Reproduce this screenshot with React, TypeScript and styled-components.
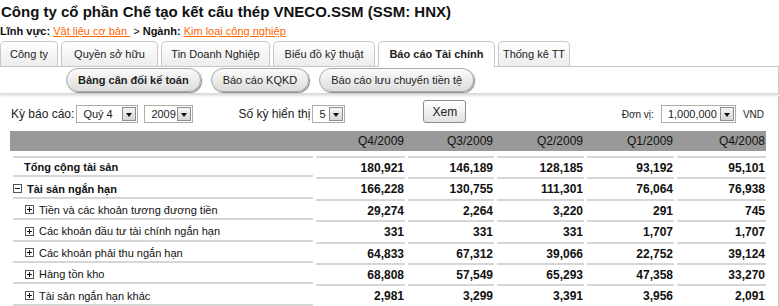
import React from 'react';
import styled, { createGlobalStyle } from 'styled-components';

const GlobalStyle = createGlobalStyle`
  body {
    margin: 0;
    background: #fff;
    color: #1a1a1a;
    font-family: "Liberation Sans", Arial, sans-serif;
  }
`;

type Row = {
  label: string;
  level: 0 | 1 | 2;
  open?: boolean;
  values: string[];
};

const periods = ['Q4/2009', 'Q3/2009', 'Q2/2009', 'Q1/2009', 'Q4/2008'];

const rows: Row[] = [
  { label: 'Tổng cộng tài sản', level: 0, values: ['180,921', '146,189', '128,185', '93,192', '95,101'] },
  { label: 'Tài sản ngắn hạn', level: 1, open: true, values: ['166,228', '130,755', '111,301', '76,064', '76,938'] },
  { label: 'Tiền và các khoản tương đương tiền', level: 2, values: ['29,274', '2,264', '3,220', '291', '745'] },
  { label: 'Các khoản đầu tư tài chính ngắn hạn', level: 2, values: ['331', '331', '331', '1,707', '1,707'] },
  { label: 'Các khoản phải thu ngắn hạn', level: 2, values: ['64,833', '67,312', '39,066', '22,752', '39,124'] },
  { label: 'Hàng tồn kho', level: 2, values: ['68,808', '57,549', '65,293', '47,358', '33,270'] },
  { label: 'Tài sản ngắn hạn khác', level: 2, values: ['2,981', '3,299', '3,391', '3,956', '2,091'] },
];

const tabs = [
  { name: 'Công ty', width: 58 },
  { name: 'Quyền sở hữu', width: 97 },
  { name: 'Tin Doanh Nghiệp', width: 109 },
  { name: 'Biểu đồ kỹ thuật', width: 102 },
  { name: 'Báo cáo Tài chính', width: 117, active: true },
  { name: 'Thống kê TT', width: 72 },
];

const reports = ['Bảng cân đối kế toán', 'Báo cáo KQKD', 'Báo cáo lưu chuyển tiền tệ'];

const ExpandIcon: React.FC<{ open?: boolean }> = ({ open }) => (
  <svg width="9" height="9" viewBox="0 0 9 9">
    <rect x="0.5" y="0.5" width="8" height="8" fill="#fff" stroke="#555" />
    <line x1="2" y1="4.5" x2="7" y2="4.5" stroke="#111" />
    {open ? null : <line x1="4.5" y1="2" x2="4.5" y2="7" stroke="#111" />}
  </svg>
);

const Select: React.FC<{ value: string; width: number }> = ({ value, width }) => (
  <SelectBox $width={width}>
    <span>{value}</span>
    <SelectArrow>
      <Triangle />
    </SelectArrow>
  </SelectBox>
);

const App: React.FC = () => {
  return (
    <Page>
      <GlobalStyle />
      <Title>Công ty cổ phần Chế tạo kết cấu thép VNECO.SSM (SSM: HNX)</Title>
      <Sector>
        <b>Lĩnh vực:</b> <OrangeLink href="#">Vật liệu cơ bản </OrangeLink> &gt; <b>Ngành:</b>{' '}
        <OrangeLink href="#">Kim loại công nghiệp</OrangeLink>
      </Sector>

      <TabBar>
        {tabs.map((t) => (
          <Tab key={t.name} $width={t.width} $active={!!t.active}>
            {t.name}
          </Tab>
        ))}
      </TabBar>

      <ReportBar>
        {reports.map((r, i) => (
          <Pill key={r} $active={i === 0}>
            {r}
          </Pill>
        ))}
      </ReportBar>

      <Content>
        <Controls>
          <Label>Kỳ báo cáo:</Label>
          <Select value="Quý 4" width={62} />
          <Select value="2009" width={49} />
          <Label $gap={39}>Số kỳ hiển thị</Label>
          <Select value="5" width={33} />
          <ViewButton>Xem</ViewButton>
          <Unit>
            <SmallText>Đơn vị:</SmallText>
            <Select value="1,000,000" width={75} />
            <SmallText>VND</SmallText>
          </Unit>
        </Controls>

        <Table>
          <HeaderRow>
            <span />
            {periods.map((p) => (
              <HeaderCell key={p}>{p}</HeaderCell>
            ))}
          </HeaderRow>
          <DataRow $height={5}>
            <Cell />
            {periods.map((p) => (
              <Cell key={p} />
            ))}
          </DataRow>
          {rows.map((row) => (
            <DataRow key={row.label} $height={19.4}>
              <LabelCell $level={row.level}>
                {row.level > 0 ? <ExpandIcon open={row.open} /> : null}
                <RowName $bold={row.level < 2}>{row.label}</RowName>
              </LabelCell>
              {row.values.map((v, i) => (
                <ValueCell key={i}>{v}</ValueCell>
              ))}
            </DataRow>
          ))}
        </Table>
      </Content>
    </Page>
  );
};

const Page = styled.div`
  width: 779px;
`;

const Title = styled.h1`
  margin: 0;
  padding: 2px 0 0 1px;
  font-size: 15px;
  line-height: 20px;
  font-weight: bold;
  color: #111;
`;

const Sector = styled.div`
  margin-top: 2px;
  font-size: 11px;
  line-height: 14px;
  color: #111;
`;

const OrangeLink = styled.a`
  color: #ff6600;
  text-decoration: underline;
  white-space: pre;
`;

const TabBar = styled.div`
  display: flex;
  align-items: flex-end;
  gap: 3px;
  margin-top: 3px;
  height: 25px;
  border-bottom: 1px solid #c8c8c8;
`;

const Tab = styled.div<{ $width: number; $active: boolean }>`
  box-sizing: border-box;
  width: ${(p) => p.$width}px;
  height: ${(p) => (p.$active ? 26 : 25)}px;
  margin-bottom: ${(p) => (p.$active ? -1 : 0)}px;
  border: 1px solid #c8c8c8;
  border-bottom: none;
  border-radius: 5px 5px 0 0;
  background: ${(p) => (p.$active ? '#fff' : 'linear-gradient(#ffffff, #ececec)')};
  font-size: 11px;
  font-weight: ${(p) => (p.$active ? 'bold' : 'normal')};
  color: #222;
  display: flex;
  align-items: center;
  justify-content: center;
  padding-bottom: ${(p) => (p.$active ? 1 : 0)}px;
  white-space: nowrap;
`;

const ReportBar = styled.div`
  display: flex;
  gap: 10px;
  padding: 1px 0 1px 66px;
  border-right: 1px solid #c8c8c8;
  border-bottom: 1px solid #d8d8d8;
  box-shadow: 0 2px 2px rgba(0, 0, 0, 0.12);
`;

const Pill = styled.div<{ $active: boolean }>`
  box-sizing: border-box;
  height: 24px;
  padding: 0 11px;
  border: 1px solid #a8a8a8;
  border-radius: 12px;
  background: linear-gradient(#fbfbfb, #dcdcdc);
  box-shadow: 1px 1px 1px #8a8a8a;
  font-size: 11px;
  font-weight: ${(p) => (p.$active ? 'bold' : 'normal')};
  color: #222;
  display: flex;
  align-items: center;
  white-space: nowrap;
`;

const Content = styled.div`
  margin-top: 2px;
  border-right: 1px solid #c8c8c8;
  padding-bottom: 10px;
`;

const Controls = styled.div`
  display: flex;
  align-items: flex-end;
  padding: 4px 0 0 11px;
  font-size: 12px;
`;

const Label = styled.span<{ $gap?: number }>`
  line-height: 18px;
  margin-left: ${(p) => p.$gap || 0}px;
  margin-right: 2px;
  color: #222;
  white-space: nowrap;
`;

const SelectBox = styled.div<{ $width: number }>`
  box-sizing: border-box;
  width: ${(p) => p.$width}px;
  height: 18px;
  margin-right: 6px;
  padding: 0 1px 0 6px;
  border: 1px solid #b0aca0;
  background: #fff;
  display: flex;
  align-items: center;
  justify-content: space-between;
  font-size: 11px;
  color: #222;
`;

const SelectArrow = styled.span`
  box-sizing: border-box;
  width: 14px;
  height: 14px;
  border: 1px solid #8f8f8f;
  background: linear-gradient(#f4f4f4, #d6d6d6);
  display: flex;
  align-items: center;
  justify-content: center;
`;

const Triangle = styled.span`
  width: 0;
  height: 0;
  margin-top: 2px;
  border-left: 3.5px solid transparent;
  border-right: 3.5px solid transparent;
  border-top: 4px solid #111;
`;

const ViewButton = styled.button`
  box-sizing: border-box;
  width: 43px;
  height: 23px;
  margin-left: 72px;
  padding: 0;
  border: 1px solid #8c8c8c;
  border-radius: 3px;
  background: linear-gradient(#ffffff, #e2e2e2);
  font-family: inherit;
  font-size: 12px;
  color: #222;
`;

const Unit = styled.div`
  display: flex;
  align-items: center;
  gap: 7px;
  margin-left: auto;
  margin-right: 14px;
  & > div {
    margin-right: 0;
  }
`;

const SmallText = styled.span`
  font-size: 10px;
  color: #222;
`;

const Table = styled.div`
  margin: 8px 0 0 10px;
  width: 756px;
`;

const columns = '300px 89px 86px 87px 87px 89px';

const HeaderRow = styled.div`
  display: grid;
  grid-template-columns: ${columns};
  column-gap: 3px;
  padding-left: 3px;
  height: 20px;
  background: #999999;
`;

const HeaderCell = styled.div`
  text-align: right;
  padding-right: 1px;
  font-size: 12px;
  line-height: 20px;
  color: #111;
`;

const DataRow = styled.div<{ $height: number }>`
  display: grid;
  grid-template-columns: ${columns};
  column-gap: 3px;
  padding-left: 3px;
  & > div {
    height: ${(p) => p.$height}px;
    border-bottom: 2px solid #d6d6d6;
  }
`;

const Cell = styled.div``;

const LabelCell = styled.div<{ $level: number }>`
  display: flex;
  align-items: center;
  gap: 5px;
  padding-left: ${(p) => (p.$level === 0 ? 11 : p.$level === 1 ? 0 : 12)}px;
  padding-top: 1px;
  box-sizing: border-box;
`;

const RowName = styled.span<{ $bold: boolean }>`
  font-size: 11px;
  font-weight: ${(p) => (p.$bold ? 'bold' : 'normal')};
  color: #111;
  white-space: nowrap;
`;

const ValueCell = styled.div`
  text-align: right;
  padding-right: 1px;
  font-size: 12px;
  font-weight: bold;
  line-height: 20px;
  color: #111;
`;

export default App;
